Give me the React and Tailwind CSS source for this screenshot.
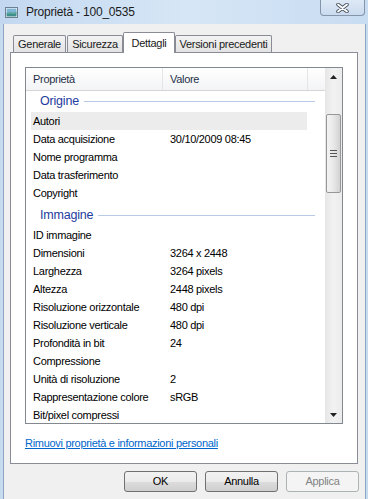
import React from 'react';

const origine = [
  ['Autori', '', true],
  ['Data acquisizione', '30/10/2009 08:45'],
  ['Nome programma', ''],
  ['Data trasferimento', ''],
  ['Copyright', ''],
];

const immagine = [
  ['ID immagine', ''],
  ['Dimensioni', '3264 x 2448'],
  ['Larghezza', '3264 pixels'],
  ['Altezza', '2448 pixels'],
  ['Risoluzione orizzontale', '480 dpi'],
  ['Risoluzione verticale', '480 dpi'],
  ['Profondità in bit', '24'],
  ['Compressione', ''],
  ['Unità di risoluzione', '2'],
  ['Rappresentazione colore', 'sRGB'],
  ['Bit/pixel compressi', ''],
];

const Row = ({ name, value, hover }) => (
  <div className={`ml-[5px] flex h-[18px] w-[276px] items-center ${hover ? 'bg-[#ececec]' : ''}`}>
    <span className="w-[139px] pl-[2px] whitespace-nowrap">{name}</span>
    <span className="whitespace-nowrap">{value}</span>
  </div>
);

const Group = ({ title }) => (
  <div className="flex h-[24px] items-center pt-[2px] pl-[14px] pr-[10px]">
    <span className="text-[12.5px] tracking-[-0.2px] text-[#1e3c9e]">{title}</span>
    <div className="ml-[5px] h-px flex-1 bg-[#b9cae6]" />
  </div>
);

const Tab = ({ label, width, active }) =>
  active ? (
    <div
      className={`relative z-10 -mb-px flex h-[21px] items-start justify-center rounded-t-[2px] border border-b-0 border-[#898c95] bg-white pt-[2px] ${width}`}
    >
      {label}
    </div>
  ) : (
    <div
      className={`flex h-[17px] items-center justify-center rounded-t-[2px] border border-b-0 border-[#898c95] bg-gradient-to-b from-[#f3f3f3] to-[#e3e3e3] ${width}`}
    >
      {label}
    </div>
  );

const Button = ({ label, disabled }) => (
  <div
    className={`flex h-[21px] w-[73px] items-center justify-center rounded-[3px] border ${
      disabled
        ? 'border-[#adb2b5] bg-[#f4f4f4] text-[#838383]'
        : 'border-[#707070] bg-[linear-gradient(#f2f2f2_0%,#ebebeb_50%,#dddddd_51%,#cfcfcf_100%)] text-black'
    }`}
  >
    {label}
  </div>
);

export default function App() {
  return (
    <div className="relative h-[499px] w-[368px] overflow-hidden bg-[#c2d7ef] font-['Liberation_Sans',Arial,sans-serif] text-[11px] tracking-[-0.3px] text-black">
      {/* Title bar */}
      <div className="relative flex h-[24px] items-center bg-gradient-to-r from-[#c3d8f0] via-[#d6e6f6] to-[#c8dcf1]">
        <svg width="13" height="11" viewBox="0 0 13 11" className="ml-[5px] mt-[1px]">
          <rect x="0.5" y="0.5" width="12" height="10" fill="#fff" stroke="#6c7f93" />
          <rect x="1.5" y="1.5" width="10" height="4" fill="#7fb6d8" />
          <rect x="1.5" y="5.5" width="10" height="4" fill="#3e8f8a" />
          <path d="M1.5 6.5 L5 4.8 L8 6 L11.5 4.5 L11.5 7 L1.5 7 Z" fill="#5aa5a0" />
        </svg>
        <span className="ml-[8px] text-[12px] tracking-[-0.2px] text-[#1b1b1b]">Proprietà - 100_0535</span>
        <div className="absolute right-[3px] top-0 flex h-[16px] w-[45px] items-center justify-center rounded-b-[4px] border border-t-0 border-[#8494aa] bg-gradient-to-b from-[#dde9f5] to-[#cadaee]">
          <svg width="13" height="10" viewBox="0 0 13 10">
            <path d="M2 1.5 L11 8.5 M11 1.5 L2 8.5" stroke="#4b5563" strokeWidth="3.6" strokeLinecap="round" />
            <path d="M2 1.5 L11 8.5 M11 1.5 L2 8.5" stroke="#ffffff" strokeWidth="1.8" strokeLinecap="round" />
          </svg>
        </div>
      </div>

      {/* Body */}
      <div className="flex h-[475px]">
        <div className="w-[3px] bg-[#c6daf0]" />
        <div className="flex w-[363px] flex-col border-x border-[#8ea6c4] bg-[#f0f0f0] px-[6px]">
          {/* Tabs */}
          <div className="flex h-[28px] items-end pl-[3px] text-[#1a1a1a]">
            <Tab label="Generale" width="w-[53px]" />
            <div className="w-[1px]" />
            <Tab label="Sicurezza" width="w-[56px]" />
            <Tab label="Dettagli" width="w-[52px]" active />
            <Tab label="Versioni precedenti" width="w-[97px]" />
          </div>

          {/* Tab panel */}
          <div className="h-[412px] w-[348px] border border-[#898c95] bg-white pl-[14px] pt-[14px]">
            <div className="flex h-[357px] w-[318px] border border-[#828790]">
              <div className="flex w-[299px] flex-col">
                <div className="flex h-[23px] border-b border-[#d5d5d5] bg-gradient-to-b from-[#ffffff] to-[#f3f4f6] text-[#253047]">
                  <div className="flex w-[137px] items-center border-r border-[#e3e5e9] pl-[7px]">Proprietà</div>
                  <div className="flex w-[145px] items-center border-r border-[#e3e5e9] pl-[7px]">Valore</div>
                  <div className="flex-1" />
                </div>
                <div className="flex-1 overflow-hidden">
                  <div className="-mt-[3px]">
                    <Group title="Origine" />
                    {origine.map(([n, v, h]) => (
                      <Row key={n} name={n} value={v} hover={h} />
                    ))}
                    <Group title="Immagine" />
                    {immagine.map(([n, v]) => (
                      <Row key={n} name={n} value={v} />
                    ))}
                  </div>
                </div>
              </div>

              {/* Scrollbar */}
              <div className="flex w-[17px] flex-col items-center bg-gradient-to-r from-[#e6e6e6] via-[#f2f2f2] to-[#ebebeb]">
                <div className="flex h-[17px] w-full items-center justify-center">
                  <svg width="7" height="4" viewBox="0 0 7 4">
                    <path d="M3.5 0 L7 4 L0 4 Z" fill="#222" />
                  </svg>
                </div>
                <div className="mt-[29px] flex h-[79px] w-[15px] flex-col items-center justify-center gap-[2px] rounded-[2px] border border-[#979797] bg-gradient-to-r from-[#f4f4f4] via-[#e8e8e8] to-[#d2d2d2]">
                  <div className="h-px w-[7px] bg-[#555]" />
                  <div className="h-px w-[7px] bg-[#555]" />
                  <div className="h-px w-[7px] bg-[#555]" />
                </div>
                <div className="flex-1" />
                <div className="flex h-[17px] w-full items-center justify-center">
                  <svg width="7" height="4" viewBox="0 0 7 4">
                    <path d="M0 0 L7 0 L3.5 4 Z" fill="#222" />
                  </svg>
                </div>
              </div>
            </div>

            <div className="mt-[12px] leading-[14px]">
              <span className="text-[#0066cc] underline">Rimuovi proprietà e informazioni personali</span>
            </div>
          </div>

          {/* Buttons */}
          <div className="mt-[7px] flex justify-end gap-[8px]">
            <Button label="OK" />
            <Button label="Annulla" />
            <Button label="Applica" disabled />
          </div>
        </div>
        <div className="flex-1 bg-[#c6daf0]" />
      </div>
    </div>
  );
}
